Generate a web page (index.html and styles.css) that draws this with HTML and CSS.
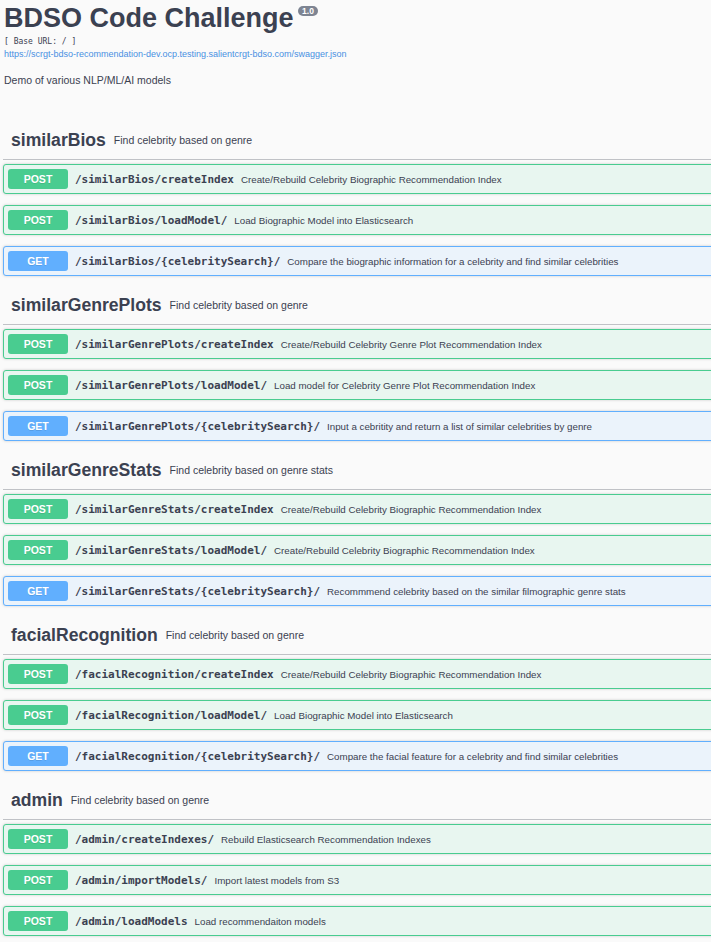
FILE: index.html
```html
<!DOCTYPE html>
<html>
<head>
<meta charset="utf-8">
<link rel="stylesheet" href="styles.css">
</head>
<body>
<div class="wrapper">
  <div class="info">
    <h2 class="title">BDSO Code Challenge <small class="version">1.0</small></h2>
    <div class="base-url">[ Base URL: / ]</div>
    <a class="spec-link" href="#">https://scrgt-bdso-recommendation-dev.ocp.testing.salientcrgt-bdso.com/swagger.json</a>
    <p class="desc">Demo of various NLP/ML/AI models</p>
  </div>

  <section class="tag">
    <h4 class="tag-header"><span class="tag-name">similarBios</span><small class="tag-desc">Find celebrity based on genre</small></h4>
    <div class="op post"><span class="method">POST</span><span class="path">/similarBios/createIndex</span><span class="summary">Create/Rebuild Celebrity Biographic Recommendation Index</span></div>
    <div class="op post"><span class="method">POST</span><span class="path">/similarBios/loadModel/</span><span class="summary">Load Biographic Model into Elasticsearch</span></div>
    <div class="op get"><span class="method">GET</span><span class="path">/similarBios/{celebritySearch}/</span><span class="summary">Compare the biographic information for a celebrity and find similar celebrities</span></div>
  </section>

  <section class="tag">
    <h4 class="tag-header"><span class="tag-name">similarGenrePlots</span><small class="tag-desc">Find celebrity based on genre</small></h4>
    <div class="op post"><span class="method">POST</span><span class="path">/similarGenrePlots/createIndex</span><span class="summary">Create/Rebuild Celebrity Genre Plot Recommendation Index</span></div>
    <div class="op post"><span class="method">POST</span><span class="path">/similarGenrePlots/loadModel/</span><span class="summary">Load model for Celebrity Genre Plot Recommendation Index</span></div>
    <div class="op get"><span class="method">GET</span><span class="path">/similarGenrePlots/{celebritySearch}/</span><span class="summary">Input a cebritity and return a list of similar celebrities by genre</span></div>
  </section>

  <section class="tag">
    <h4 class="tag-header"><span class="tag-name">similarGenreStats</span><small class="tag-desc">Find celebrity based on genre stats</small></h4>
    <div class="op post"><span class="method">POST</span><span class="path">/similarGenreStats/createIndex</span><span class="summary">Create/Rebuild Celebrity Biographic Recommendation Index</span></div>
    <div class="op post"><span class="method">POST</span><span class="path">/similarGenreStats/loadModel/</span><span class="summary">Create/Rebuild Celebrity Biographic Recommendation Index</span></div>
    <div class="op get"><span class="method">GET</span><span class="path">/similarGenreStats/{celebritySearch}/</span><span class="summary">Recommmend celebrity based on the similar filmographic genre stats</span></div>
  </section>

  <section class="tag">
    <h4 class="tag-header"><span class="tag-name">facialRecognition</span><small class="tag-desc">Find celebrity based on genre</small></h4>
    <div class="op post"><span class="method">POST</span><span class="path">/facialRecognition/createIndex</span><span class="summary">Create/Rebuild Celebrity Biographic Recommendation Index</span></div>
    <div class="op post"><span class="method">POST</span><span class="path">/facialRecognition/loadModel/</span><span class="summary">Load Biographic Model into Elasticsearch</span></div>
    <div class="op get"><span class="method">GET</span><span class="path">/facialRecognition/{celebritySearch}/</span><span class="summary">Compare the facial feature for a celebrity and find similar celebrities</span></div>
  </section>

  <section class="tag">
    <h4 class="tag-header"><span class="tag-name">admin</span><small class="tag-desc">Find celebrity based on genre</small></h4>
    <div class="op post"><span class="method">POST</span><span class="path">/admin/createIndexes/</span><span class="summary">Rebuild Elasticsearch Recommendation Indexes</span></div>
    <div class="op post"><span class="method">POST</span><span class="path">/admin/importModels/</span><span class="summary">Import latest models from S3</span></div>
    <div class="op post"><span class="method">POST</span><span class="path">/admin/loadModels</span><span class="summary">Load recommendaiton models</span></div>
  </section>
</div>
</body>
</html>
```
FILE: styles.css
```css
html, body {
  margin: 0;
  padding: 0;
  background: #fafafa;
  overflow: hidden;
}
body {
  font-family: "Liberation Sans", Arial, sans-serif;
  color: #3b4151;
}
.wrapper {
  padding: 2px 0 0 3px;
  margin-right: -12px;
}
.info {
  padding-left: 1px;
}
.title {
  margin: 0;
  font-size: 27px;
  line-height: 32px;
  font-weight: 700;
  color: #3b4151;
}
.version {
  display: inline-block;
  position: relative;
  top: -13px;
  margin-left: -3px;
  padding: 0 4px;
  border-radius: 40px;
  background: #7d8492;
  color: #fff;
  font-size: 8.5px;
  line-height: 10px;
  font-weight: 700;
  vertical-align: baseline;
}
.base-url {
  font-family: "DejaVu Sans Mono", monospace;
  font-size: 8px;
  line-height: 12px;
  margin-top: 2px;
  color: #3b4151;
}
.spec-link {
  display: block;
  font-size: 9px;
  line-height: 12px;
  color: #4990e2;
  text-decoration: none;
}
.desc {
  margin: 13px 0 0;
  font-size: 10.5px;
  line-height: 14px;
}
.info + .tag {
  margin-top: 35px;
}
.tag-header {
  margin: 0 0 4px;
  padding: 6px 0 7px 8px;
  border-bottom: 1px solid rgba(59, 65, 81, 0.3);
  display: flex;
  align-items: center;
  height: 24px;
}
.tag-name {
  font-size: 17.6px;
  font-weight: 700;
  line-height: 24px;
}
.tag-desc {
  font-size: 10.5px;
  font-weight: 400;
  padding-left: 8px;
  line-height: 24px;
}
.op {
  display: flex;
  align-items: center;
  height: 20px;
  padding: 4px 4px 4px;
  margin-bottom: 11px;
  border: 1px solid;
  border-radius: 3px;
  box-shadow: 0 0 3px rgba(0, 0, 0, 0.19);
}
.op.post {
  background: #e8f6f0;
  border-color: #49cc90;
}
.op.get {
  background: #ebf3fb;
  border-color: #61affe;
}
.method {
  width: 60px;
  height: 20px;
  line-height: 20px;
  text-align: center;
  font-size: 10.5px;
  font-weight: 700;
  color: #fff;
  border-radius: 3px;
  text-shadow: 0 1px 0 rgba(0, 0, 0, 0.1);
  flex: none;
}
.post .method { background: #49cc90; }
.get .method { background: #61affe; }
.path {
  font-family: "DejaVu Sans Mono", monospace;
  font-size: 11px;
  font-weight: 700;
  padding: 0 7px 0 7px;
  color: #3b4151;
}
.summary {
  font-size: 9.75px;
  color: #3b4151;
}
```
